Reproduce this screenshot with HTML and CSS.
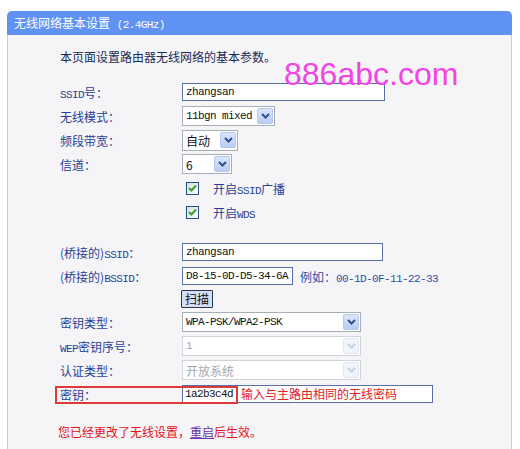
FILE: index.html
```html
<!DOCTYPE html>
<html lang="zh-CN">
<head>
    <meta charset="UTF-8">
    <title>无线网络基本设置</title>
    <link rel="stylesheet" href="styles.css">
</head>
<body>
    <div class="panel">
        <div class="panel-head">无线网络基本设置 <span class="en">(2.4GHz)</span></div>
        <div class="panel-body">
            <div class="watermark">886abc.com</div>
            <p class="intro">本页面设置路由器无线网络的基本参数。</p>

            <div class="form">
                <div class="row">
                    <label><span class="en">SSID</span>号：</label>
                    <div class="field"><div class="input w-ssid">zhangsan</div></div>
                </div>
                <div class="row">
                    <label>无线模式：</label>
                    <div class="field">
                        <div class="sel w-mode"><span class="sel-val mono">11bgn mixed</span><span class="sel-btn"><svg width="9" height="6" viewBox="0 0 9 6"><path d="M1 1l3.5 3.5L8 1" fill="none" stroke="#2d4f8c" stroke-width="2"/></svg></span></div>
                    </div>
                </div>
                <div class="row">
                    <label>频段带宽：</label>
                    <div class="field">
                        <div class="sel w-band"><span class="sel-val">自动</span><span class="sel-btn"><svg width="9" height="6" viewBox="0 0 9 6"><path d="M1 1l3.5 3.5L8 1" fill="none" stroke="#2d4f8c" stroke-width="2"/></svg></span></div>
                    </div>
                </div>
                <div class="row">
                    <label>信道：</label>
                    <div class="field">
                        <div class="sel w-chan"><span class="sel-val">6</span><span class="sel-btn"><svg width="9" height="6" viewBox="0 0 9 6"><path d="M1 1l3.5 3.5L8 1" fill="none" stroke="#2d4f8c" stroke-width="2"/></svg></span></div>
                    </div>
                </div>
                <div class="row">
                    <label></label>
                    <div class="field check">
                        <span class="box"><svg width="9" height="8" viewBox="0 0 9 8"><path d="M1 4l2.5 2.5L8 1.5" fill="none" stroke="#3aa02a" stroke-width="2"/></svg></span>
                        <span>开启<span class="en">SSID</span>广播</span>
                    </div>
                </div>
                <div class="row">
                    <label></label>
                    <div class="field check">
                        <span class="box"><svg width="9" height="8" viewBox="0 0 9 8"><path d="M1 4l2.5 2.5L8 1.5" fill="none" stroke="#3aa02a" stroke-width="2"/></svg></span>
                        <span>开启<span class="en">WDS</span></span>
                    </div>
                </div>

                <div class="row gap-top">
                    <label>(桥接的)<span class="en">SSID</span>：</label>
                    <div class="field"><div class="input w-bssid-name">zhangsan</div></div>
                </div>
                <div class="row">
                    <label>(桥接的)<span class="en">BSSID</span>：</label>
                    <div class="field">
                        <div class="input w-mac">D8-15-0D-D5-34-6A</div>
                        <span class="hint">例如：<span class="en">00-1D-0F-11-22-33</span></span>
                    </div>
                </div>
                <div class="row short">
                    <label></label>
                    <div class="field"><button class="scan">扫描</button></div>
                </div>
                <div class="row">
                    <label>密钥类型：</label>
                    <div class="field">
                        <div class="sel w-key"><span class="sel-val mono">WPA-PSK/WPA2-PSK</span><span class="sel-btn"><svg width="9" height="6" viewBox="0 0 9 6"><path d="M1 1l3.5 3.5L8 1" fill="none" stroke="#2d4f8c" stroke-width="2"/></svg></span></div>
                    </div>
                </div>
                <div class="row">
                    <label><span class="en">WEP</span>密钥序号：</label>
                    <div class="field">
                        <div class="sel w-key off"><span class="sel-val mono">1</span><span class="sel-btn"><svg width="9" height="6" viewBox="0 0 9 6"><path d="M1 1l3.5 3.5L8 1" fill="none" stroke="#c4cfe0" stroke-width="2"/></svg></span></div>
                    </div>
                </div>
                <div class="row">
                    <label>认证类型：</label>
                    <div class="field">
                        <div class="sel w-key off"><span class="sel-val">开放系统</span><span class="sel-btn"><svg width="9" height="6" viewBox="0 0 9 6"><path d="M1 1l3.5 3.5L8 1" fill="none" stroke="#c4cfe0" stroke-width="2"/></svg></span></div>
                    </div>
                </div>
                <div class="row key-row">
                    <span class="mark"></span>
                    <label>密钥：</label>
                    <div class="field">
                        <div class="input w-pass"><span class="pass">1a2b3c4d</span><span class="note">输入与主路由相同的无线密码</span></div>
                    </div>
                </div>
            </div>

            <p class="msg">您已经更改了无线设置，<a href="#">重启</a>后生效。</p>
        </div>
    </div>
</body>
</html>
```

FILE: styles.css
```css
* {
    box-sizing: border-box;
    margin: 0;
    padding: 0;
}
body {
    background: #fff;
    font-family: "Noto Sans CJK SC", sans-serif;
    font-size: 12px;
    overflow: hidden;
}
/* 宋体的半角字符大约 6px 宽 */
.en, .mono {
    font-family: "Liberation Mono", monospace;
    font-size: 11px;
    letter-spacing: -0.6px;
}
.panel {
    margin: 11px 8px 0 7px;
    height: 438px;
}
.panel-head {
    height: 24px;
    line-height: 24px;
    padding-left: 7px;
    background: #6092f3;
    color: #fff;
    border-radius: 5px 5px 0 0;
}
.panel-head .en {
    margin-left: 4px;
}
.panel-body {
    position: relative;
    height: calc(100% - 24px);
    background: #f5f5f7;
    border-left: 1px solid #f4c68e;
    border-right: 1px solid #f4c68e;
    padding-left: 52px;
}
.watermark {
    position: absolute;
    left: 276px;
    top: 21px;
    font-family: "Liberation Sans", sans-serif;
    font-size: 32px;
    line-height: 36px;
    color: #f045e2;
    pointer-events: none;
    z-index: 2;
}
.intro {
    padding-top: 14px;
    line-height: 16px;
    color: #1b2a55;
}
.form {
    margin-top: 15px;
}
.row {
    display: flex;
    align-items: center;
    height: 24px;
}
.row.short {
    height: 22px;
}
.row.gap-top {
    margin-top: 16px;
}
.row label {
    width: 122px;
    flex: none;
    color: #1f4296;
}
.field {
    display: flex;
    align-items: center;
}
.input {
    height: 18px;
    line-height: 16px;
    padding-left: 3px;
    background: #fff;
    border: 1px solid #5a6fa8;
    font-family: "Liberation Mono", monospace;
    font-size: 11px;
    letter-spacing: -0.6px;
    color: #111;
}
.w-ssid { width: 203px; }
.w-bssid-name { width: 201px; }
.w-mac { width: 111px; }
.w-pass {
    width: 251px;
    display: flex;
    padding-left: 2px;
}
.hint {
    margin-left: 7px;
    color: #2a4ea3;
}
.sel {
    display: flex;
    align-items: center;
    height: 20px;
    background: #fff;
    border: 1px solid #a8aeb6;
    color: #111;
}
.sel-val {
    flex: 1;
    padding-left: 3px;
    white-space: nowrap;
    overflow: hidden;
}
.sel-btn {
    width: 16px;
    height: 16px;
    margin: 0 1px;
    display: flex;
    align-items: center;
    justify-content: center;
    background: linear-gradient(#dbe6fb, #b9cdf4);
    border: 1px solid #b4c7ee;
    border-radius: 2px;
}
.w-mode { width: 93px; }
.w-band { width: 56px; height: 21px; }
.w-chan { width: 50px; }
.w-key { width: 179px; }
.sel.off {
    border-color: #cfd3d8;
    color: #a4a8ae;
}
.sel.off .sel-btn {
    background: #f1f4fa;
    border-color: #e1e7f1;
}
.check {
    padding-left: 4px;
    color: #1f4296;
}
.box {
    width: 13px;
    height: 13px;
    margin-right: 14px;
    display: flex;
    align-items: center;
    justify-content: center;
    background: linear-gradient(135deg, #dcdcd6, #fff);
    border: 1px solid #1d5281;
}
.scan {
    height: 18px;
    padding: 0 3px;
    margin-left: -1px;
    font-family: "Noto Sans CJK SC", sans-serif;
    font-size: 12px;
    line-height: 14px;
    color: #111;
    background: #d6def6;
    border: 1px solid #2a3550;
    border-radius: 1px;
}
.key-row {
    position: relative;
}
.mark {
    position: absolute;
    left: -5px;
    top: 4px;
    width: 183px;
    height: 18px;
    border: 2px solid #de3a3a;
    pointer-events: none;
}
.key-row label {
    padding-top: 1px;
}
.pass {
    width: 52px;
}
.note {
    padding-left: 4px;
    font-family: "Noto Sans CJK SC", sans-serif;
    font-size: 12px;
    letter-spacing: 0;
    color: #e52121;
}
.msg {
    margin-top: 14px;
    margin-left: -2px;
    line-height: 24px;
    color: #e2121c;
}
.msg a {
    color: #7030a8;
}
```
